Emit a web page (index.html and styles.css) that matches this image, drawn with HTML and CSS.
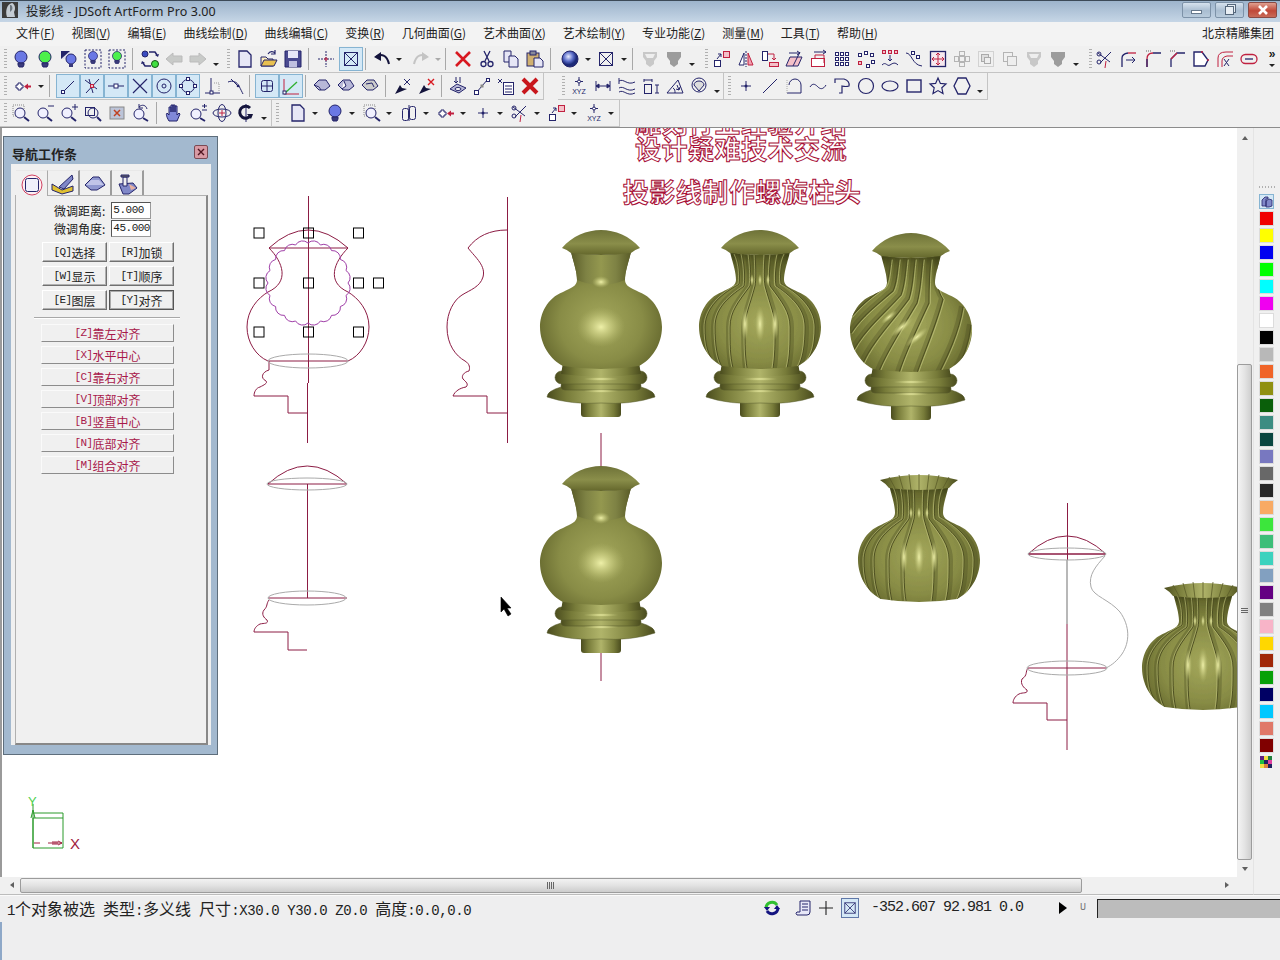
FILE: index.html
```html
<!DOCTYPE html>
<html lang="zh-CN">
<head>
<meta charset="utf-8">
<title>投影线 - JDSoft ArtForm Pro 3.00</title>
<link rel="stylesheet" href="styles.css">
</head>
<body>
<svg class="defs" width="0" height="0" aria-hidden="true">
<defs>
<radialGradient id="gBody" cx=".5" cy=".6" r=".62"><stop offset="0" stop-color="#a4a85c"/><stop offset=".55" stop-color="#888c46"/><stop offset=".85" stop-color="#686b30"/><stop offset="1" stop-color="#43461a"/></radialGradient>
<linearGradient id="gH"><stop offset="0" stop-color="#4a4c1e"/><stop offset=".18" stop-color="#777b39"/><stop offset=".5" stop-color="#b0b46a"/><stop offset=".82" stop-color="#777b39"/><stop offset="1" stop-color="#4a4c1e"/></linearGradient>
<linearGradient id="gCap" x1="0" y1="0" x2="0" y2="1"><stop offset="0" stop-color="#6e7238"/><stop offset=".55" stop-color="#8a8e4a"/><stop offset="1" stop-color="#64672c"/></linearGradient>
<linearGradient id="gNeck"><stop offset="0" stop-color="#5a5c28"/><stop offset=".25" stop-color="#7e8244"/><stop offset=".5" stop-color="#94984f"/><stop offset=".75" stop-color="#7e8244"/><stop offset="1" stop-color="#5a5c28"/></linearGradient>
<radialGradient id="gHi"><stop offset="0" stop-color="#eef0a8"/><stop offset=".5" stop-color="#cdd084" stop-opacity=".6"/><stop offset="1" stop-color="#b0b46a" stop-opacity="0"/></radialGradient>
<radialGradient id="gSph" cx=".4" cy=".35"><stop offset="0" stop-color="#e8ecff"/><stop offset=".6" stop-color="#5a6cc8"/><stop offset="1" stop-color="#1c2a78"/></radialGradient>
<path id="bodyP" d="M-30,22 C-27,34 -24,42 -24,50 C-24,56 -30,58 -38,62 C-54,68 -61,84 -61,97 C-61,115 -50,130 -38,136 Q0,142 38,136 C50,130 61,115 61,97 C61,84 54,68 38,62 C30,58 24,56 24,50 C24,42 27,34 30,22 Q0,28 -30,22Z"/>
<clipPath id="bodyClip"><use href="#bodyP"/></clipPath>
<g id="base">
<rect x="-20" y="168" width="40" height="19" rx="3" fill="url(#gH)"/>
<path d="M-40,157 Q-54,161 -54,167 Q-30,175 0,173 Q30,175 54,167 Q54,161 40,157Z" fill="url(#gH)" stroke="#55582a" stroke-width=".5"/>
<rect x="-40" y="152" width="80" height="8" rx="4" fill="url(#gH)" stroke="#55582a" stroke-width=".6"/>
<rect x="-46" y="141" width="92" height="13" rx="6.5" fill="url(#gH)" stroke="#55582a" stroke-width=".5"/>
<path d="M-38,133 L38,133 L40,144 Q0,149 -40,144Z" fill="url(#gH)"/>
<ellipse cx="0" cy="161" rx="18" ry="2" fill="url(#gHi)"/>
<ellipse cx="0" cy="149" rx="18" ry="2" fill="url(#gHi)"/>
</g>
<path id="capP" d="M-39,18 C-29,6 -14,0 0,0 C14,0 29,6 39,18 Q33,20 30,23 Q0,27 -30,23 Q-33,20 -39,18Z" fill="url(#gCap)"/>
<g id="plain">
<use href="#base"/>
<use href="#bodyP" fill="url(#gBody)"/>
<path d="M-30,22 C-27,34 -24,42 -24,50 Q0,60 24,50 C24,42 27,34 30,22 Q0,28 -30,22Z" fill="url(#gNeck)"/>
<ellipse cx="0" cy="97" rx="24" ry="20" fill="url(#gHi)"/>
<ellipse cx="0" cy="52" rx="9" ry="6" fill="url(#gHi)"/>
<use href="#capP"/>
</g>
<g id="flutesHalf" fill="none">
<path d="M5,24 C4,40 4,50 5,56 C10,75 15,85 15,97 C15,115 15,125 13,138"/>
<path d="M11,24 C9,40 9,50 10,56 C22,72 30,82 30,97 C30,115 30,125 27,138"/>
<path d="M18,24 C15,38 15,50 16,56 C34,68 45,80 45,97 C45,115 43,128 38,137"/>
<path d="M25,24 C20,34 20,48 21,54 C44,66 55,82 55,97 C55,115 52,125 46,132"/>
</g>
<g id="flutedBody">
<use href="#bodyP" fill="url(#gBody)"/>
<g clip-path="url(#bodyClip)">
<g stroke="#3c3e18" stroke-width="4" opacity=".28" transform="translate(2,0)"><use href="#flutesHalf"/></g>
<g stroke="#3c3e18" stroke-width="4" opacity=".28" transform="translate(-2,0)"><use href="#flutesHalf" transform="scale(-1,1)"/></g>
<g stroke="#4e5022" stroke-width="1"><use href="#flutesHalf"/><use href="#flutesHalf" transform="scale(-1,1)"/></g>
<g stroke="#c8cc84" stroke-width=".7" opacity=".8" transform="translate(-1,0)"><use href="#flutesHalf"/><use href="#flutesHalf" transform="scale(-1,1)"/></g>
</g>
<ellipse cx="0" cy="94" rx="5" ry="18" fill="url(#gHi)"/>
<ellipse cx="-15" cy="94" rx="4" ry="16" fill="url(#gHi)"/>
<ellipse cx="15" cy="94" rx="4" ry="16" fill="url(#gHi)"/>
<ellipse cx="0" cy="50" rx="2" ry="6" fill="url(#gHi)"/>
<ellipse cx="-8" cy="50" rx="2" ry="6" fill="url(#gHi)"/>
<ellipse cx="8" cy="50" rx="2" ry="6" fill="url(#gHi)"/>
</g>
<g id="flutedRim">
<path d="M-39,17 Q0,7 39,17 Q34,20 30,25 Q0,29 -30,25 Q-34,20 -39,17Z" fill="url(#gH)"/>
<path d="M-30,14 L-24,25 M-20,12 L-16,26 M-10,11 L-8,27 M0,11 V27 M10,11 L8,27 M20,12 L16,26 M30,14 L24,25" stroke="#5a5c28" stroke-width=".8" fill="none"/>
</g>
<g id="twistLines" fill="none">
<path d="M-20,26 C-22,40 -22,48 -26,54 C-40,64 -50,72 -60,84"/>
<path d="M-12,26 C-14,40 -14,50 -18,58 C-34,72 -50,84 -60,100"/>
<path d="M-4,26 C-6,42 -6,52 -10,62 C-26,80 -46,96 -58,118"/>
<path d="M4,26 C2,42 2,54 -2,66 C-18,88 -38,108 -48,130"/>
<path d="M12,26 C10,42 10,56 6,70 C-8,94 -24,118 -32,138"/>
<path d="M20,26 C18,42 18,56 18,70 C6,96 -6,120 -12,140"/>
<path d="M28,26 C26,42 24,54 32,66 C24,96 12,122 6,140"/>
<path d="M52,74 C48,100 36,124 28,140"/>
<path d="M60,92 C58,110 52,126 46,134"/>
</g>
<g id="bulb" stroke="#24246a"><circle cx="10" cy="8" r="6"/><path d="M7 14h6v2l-1 2H8l-1-2z" fill="#3a3a7a"/></g>
<g id="boxx" fill="none" stroke="#24246a"><rect x="3.5" y="3.5" width="13" height="13"/><path d="M3.5 3.5l13 13M16.5 3.5l-13 13"/></g>
<g id="shieldG"><path d="M3 3h14v5l-3 4v3l-4 3-4-3v-3L3 8z"/></g>
<g id="xyz"><path d="M10 1v9M6 5.500h8" stroke="#24246a" fill="none"/><circle cx="10" cy="5.500" r="1.500" fill="#fff" stroke="#24246a"/></g>
<g id="tDrop"><path d="M0 0h6l-3 3z" fill="#222"/></g>
</defs>
</svg>

<header class="titlebar">
  <svg class="appicon" viewBox="0 0 16 16"><rect width="16" height="16" fill="#3c3c3c"/><path d="M5 15C3 9 5 2 10 1c3 1 4 6 2 9l1 5z" fill="#c4ccd4"/><path d="M8 3c2 0 3 2 2 5L8 10z" fill="#6c7680"/></svg>
  <span class="title">投影线 - JDSoft ArtForm Pro 3.00</span>
  <div class="winbtns">
    <span class="wb"><i class="w-min"></i></span>
    <span class="wb"><i class="w-res"></i></span>
    <span class="wb close"><svg viewBox="0 0 12 10" width="12" height="10"><path d="M2 1l8 8M10 1L2 9" stroke="#fff" stroke-width="2.600"/></svg></span>
  </div>
</header>

<nav class="menubar">
  <span>文件(<u>F</u>)</span><span>视图(<u>V</u>)</span><span>编辑(<u>E</u>)</span><span>曲线绘制(<u>D</u>)</span><span>曲线编辑(<u>C</u>)</span><span>变换(<u>R</u>)</span><span>几何曲面(<u>G</u>)</span><span>艺术曲面(<u>X</u>)</span><span>艺术绘制(<u>Y</u>)</span><span>专业功能(<u>Z</u>)</span><span>测量(<u>M</u>)</span><span>工具(<u>T</u>)</span><span>帮助(<u>H</u>)</span>
  <span class="company">北京精雕集团</span>
</nav>

<div class="tbrow">
  <div class="tb full">
    <i class="grip"></i>
    <b class="ic"><svg viewBox="0 0 20 20"><use href="#bulb" fill="#6a78e4"/></svg></b>
    <b class="ic"><svg viewBox="0 0 20 20"><use href="#bulb" fill="#4cf04c"/></svg></b>
    <b class="ic"><svg viewBox="0 0 20 20"><path d="M2 2h9v8H2z" fill="#24246a"/><path d="M2 10l9-8v8z" fill="#e0e0ee"/><circle cx="12" cy="10" r="5" fill="#6a78e4" stroke="#24246a"/><path d="M10 15h4v3h-4z" fill="#3a3a7a"/></svg></b>
    <b class="ic"><svg viewBox="0 0 20 20"><rect x="2" y="1" width="16" height="18" fill="none" stroke="#24246a" stroke-dasharray="2 1.500"/><g transform="translate(2.500 1) scale(.75)"><use href="#bulb" fill="#6a78e4"/></g></svg></b>
    <b class="ic"><svg viewBox="0 0 20 20"><rect x="2" y="1" width="16" height="18" fill="none" stroke="#24246a" stroke-dasharray="2 1.500"/><g transform="translate(2.500 1) scale(.75)"><use href="#bulb" fill="#4cf04c"/></g></svg></b>
    <i class="sep"></i>
    <b class="ic"><svg viewBox="0 0 20 20"><circle cx="5" cy="5" r="3" fill="#3a4cc0" stroke="#24246a"/><circle cx="15" cy="15" r="3.500" fill="#40e040" stroke="#145014"/><path d="M9 3h6l2 3M11 17H5l-2-3" fill="none" stroke="#24246a" stroke-width="1.500"/><path d="M15 6l4-1-1 3zM5 14l-4 1 1-3z" fill="#24246a"/></svg></b>
    <b class="ic"><svg viewBox="0 0 20 20"><path d="M2 10l7-6v3h9v6H9v3z" fill="#c8cac8" stroke="#bbb"/></svg></b>
    <b class="ic"><svg viewBox="0 0 20 20"><path d="M18 10l-7-6v3H2v6h9v3z" fill="#c8cac8" stroke="#bbb"/></svg></b>
    <b class="dr end"><svg width="6" height="3"><use href="#tDrop"/></svg></b>
    <i class="grip g2"></i>
    <b class="ic"><svg viewBox="0 0 20 20"><path d="M4 2h8l4 4v12H4z" fill="#e6e6f6" stroke="#24246a" stroke-width="1.300"/></svg></b>
    <b class="ic"><svg viewBox="0 0 20 20"><path d="M2 17V8h5l2 2h5v7z" fill="#fff0c0" stroke="#24246a"/><path d="M2 17l3-6h13l-3 6z" fill="#e8c050" stroke="#24246a"/><path d="M9 5c2-3 5-3 7-1M16 1v4h-4" fill="none" stroke="#24246a" stroke-width="1.200"/></svg></b>
    <b class="ic"><svg viewBox="0 0 20 20"><path d="M2 2h16v16H2z" fill="#4a4a90" stroke="#24246a"/><rect x="5" y="2" width="10" height="7" fill="#e8e8f8"/><rect x="6" y="12" width="8" height="6" fill="#c0c0e0"/></svg></b>
    <i class="sep"></i>
    <b class="ic"><svg viewBox="0 0 20 20"><path d="M10 2v16M2 10h16" stroke="#24246a" stroke-dasharray="2 1" fill="none"/><path d="M8 10h4M10 8v4" stroke="#c02040"/></svg></b>
    <b class="ic on ml1"><svg viewBox="0 0 20 20"><use href="#boxx"/></svg></b>
    <i class="sep tight"></i>
    <b class="ic"><svg viewBox="0 0 20 20"><path d="M4 8c5-4 11-2 13 7" fill="none" stroke="#14143c" stroke-width="2"/><path d="M9 3L2 8l7 4z" fill="#14143c"/></svg></b>
    <b class="dr w15"><svg width="6" height="3"><use href="#tDrop"/></svg></b>
    <b class="ic"><svg viewBox="0 0 20 20"><path d="M16 8c-5-4-11-2-13 7" fill="none" stroke="#c4c4c4" stroke-width="2"/><path d="M11 3l7 5-7 4z" fill="#c4c4c4"/></svg></b>
    <b class="dr w9"><svg width="6" height="3"><path d="M0 0h6l-3 3z" fill="#aaa"/></svg></b>
    <i class="sep"></i>
    <b class="ic"><svg viewBox="0 0 20 20"><path d="M3 3l14 14M17 3L3 17" stroke="#d81820" stroke-width="2.600"/></svg></b>
    <b class="ic"><svg viewBox="0 0 20 20"><path d="M7 2l5 10M13 2L8 12" stroke="#24246a" stroke-width="1.300"/><circle cx="6.500" cy="15" r="2.500" fill="none" stroke="#24246a" stroke-width="1.300"/><circle cx="13.500" cy="15" r="2.500" fill="none" stroke="#24246a" stroke-width="1.300"/></svg></b>
    <b class="ic"><svg viewBox="0 0 20 20"><path d="M3 2h7v11H3z" fill="#e6e6f6" stroke="#24246a"/><path d="M8 7h6l3 3v8H8z" fill="#e6e6f6" stroke="#24246a"/></svg></b>
    <b class="ic"><svg viewBox="0 0 20 20"><rect x="2" y="4" width="12" height="13" fill="#d0b070" stroke="#24246a"/><rect x="5" y="2" width="6" height="4" fill="#889" stroke="#24246a"/><path d="M9 9h6l3 3v6H9z" fill="#e6e6f6" stroke="#24246a"/></svg></b>
    <i class="sep wide"></i>
    <b class="ic"><svg viewBox="0 0 20 20"><circle cx="10" cy="10" r="8" fill="url(#gSph)" stroke="#24246a"/></svg></b>
    <b class="dr w12"><svg width="6" height="3"><use href="#tDrop"/></svg></b>
    <b class="ic"><svg viewBox="0 0 20 20"><use href="#boxx"/></svg></b>
    <b class="dr w11"><svg width="6" height="3"><use href="#tDrop"/></svg></b>
    <i class="sep"></i>
    <b class="ic"><svg viewBox="0 0 20 20"><use href="#shieldG" fill="#c8c8c8"/><path d="M5 5h10l-2 4H7z" fill="#eee"/></svg></b>
    <b class="ic"><svg viewBox="0 0 20 20"><use href="#shieldG" fill="#9c9c9c"/></svg></b>
    <b class="dr end"><svg width="6" height="3"><use href="#tDrop"/></svg></b>
    <i class="grip g3"></i>
    <b class="ic"><svg viewBox="0 0 20 20"><rect x="2.500" y="11.500" width="6" height="6" fill="#fff" stroke="#24246a"/><rect x="11.500" y="2.500" width="6" height="6" fill="#f4c0c8" stroke="#c02040"/><path d="M5 10l4-5M6 5h3v3" stroke="#24246a" fill="none"/></svg></b>
    <b class="ic"><svg viewBox="0 0 20 20"><path d="M8 4L3 16h5z" fill="#fff" stroke="#24246a"/><path d="M12 4l5 12h-5z" fill="#f0a0b0" stroke="#c02040"/><path d="M10 2v16" stroke="#24246a" stroke-dasharray="2 1"/></svg></b>
    <b class="ic"><svg viewBox="0 0 20 20"><rect x="2.500" y="2.500" width="5" height="9" fill="#fff" stroke="#24246a"/><rect x="9.500" y="13.500" width="9" height="4" fill="#f4c0c8" stroke="#c02040"/><path d="M8 5h6v6M12 9l2 2 2-2" fill="none" stroke="#c02040"/></svg></b>
    <b class="ic"><svg viewBox="0 0 20 20"><path d="M6 8h12l-4 9H2z" fill="#f4c0c8" stroke="#24246a"/><path d="M9 17l7-14M5 4h11M13 2l3 2-3 2" stroke="#24246a" fill="none"/></svg></b>
    <b class="ic"><svg viewBox="0 0 20 20"><rect x="3.500" y="9.500" width="13" height="8" fill="#fff" stroke="#c02040"/><path d="M7 9V6h9v8" fill="none" stroke="#c02040"/><path d="M6 3h12M15 1l3 2-3 2" stroke="#24246a" fill="none"/></svg></b>
    <b class="ic"><svg viewBox="0 0 20 20"><g fill="#fff" stroke="#24246a"><rect x="3.500" y="3.500" width="3" height="3"/><rect x="8.500" y="3.500" width="3" height="3"/><rect x="13.500" y="3.500" width="3" height="3"/><rect x="3.500" y="8.500" width="3" height="3"/><rect x="8.500" y="8.500" width="3" height="3"/><rect x="13.500" y="8.500" width="3" height="3"/><rect x="3.500" y="13.500" width="3" height="3"/><rect x="8.500" y="13.500" width="3" height="3"/><rect x="13.500" y="13.500" width="3" height="3"/></g></svg></b>
    <b class="ic"><svg viewBox="0 0 20 20"><g fill="#fff" stroke="#24246a"><rect x="8.500" y="2.500" width="3" height="3"/><rect x="14.500" y="4.500" width="3" height="3"/><rect x="2.500" y="4.500" width="3" height="3"/><rect x="15.500" y="11.500" width="3" height="3"/><rect x="10.500" y="15.500" width="3" height="3"/></g><rect x="2.500" y="12.500" width="3" height="3" fill="#f4c0c8" stroke="#c02040"/></svg></b>
    <b class="ic"><svg viewBox="0 0 20 20"><g fill="#f4c0c8" stroke="#c02040"><rect x="2.500" y="1.500" width="3" height="3"/><rect x="8.500" y="1.500" width="3" height="3"/><rect x="14.500" y="1.500" width="3" height="3"/></g><path d="M10 6v6M8 10l2 2 2-2M2 16c4-4 5 2 8 0s5-3 8 0" stroke="#24246a" fill="none"/></svg></b>
    <b class="ic"><svg viewBox="0 0 20 20"><path d="M2 4c6 0 6 12 16 13" fill="none" stroke="#24246a"/><g fill="#fff" stroke="#24246a"><rect x="7.500" y="2.500" width="3" height="3"/><rect x="12.500" y="6.500" width="3" height="3"/></g></svg></b>
    <b class="ic"><svg viewBox="0 0 20 20"><rect x="2.500" y="2.500" width="15" height="15" fill="#f6e8ee" stroke="#24246a" stroke-width="1.300"/><path d="M10 4v12M4 10h12M8 6l2-2 2 2M8 14l2 2 2-2M6 8l-2 2 2 2M14 8l2 2-2 2" fill="none" stroke="#c02040"/></svg></b>
    <b class="ic"><svg viewBox="0 0 20 20"><g fill="none" stroke="#b4b4b4"><rect x="7.500" y="2.500" width="5" height="4"/><rect x="7.500" y="13.500" width="5" height="4"/><rect x="2.500" y="7.500" width="4" height="5"/><rect x="13.500" y="7.500" width="4" height="5"/><rect x="7.500" y="7.500" width="5" height="5"/></g></svg></b>
    <b class="ic"><svg viewBox="0 0 20 20"><rect x="2.500" y="2.500" width="15" height="15" fill="none" stroke="#b4b4b4" stroke-dasharray="1 1"/><rect x="5.500" y="5.500" width="7" height="7" fill="#ddd" stroke="#aaa"/><rect x="8.500" y="8.500" width="6" height="6" fill="#eee" stroke="#aaa"/></svg></b>
    <b class="ic"><svg viewBox="0 0 20 20"><rect x="3.500" y="3.500" width="9" height="9" fill="none" stroke="#b4b4b4"/><rect x="7.500" y="7.500" width="9" height="9" fill="#eee" stroke="#b4b4b4"/></svg></b>
    <b class="ic"><svg viewBox="0 0 20 20"><use href="#shieldG" fill="#c8c8c8"/><path d="M5 5h10l-2 4H7z" fill="#eee"/></svg></b>
    <b class="ic"><svg viewBox="0 0 20 20"><use href="#shieldG" fill="#9c9c9c"/></svg></b>
    <b class="dr end"><svg width="6" height="3"><use href="#tDrop"/></svg></b>
    <i class="grip g4"></i>
    <b class="ic"><svg viewBox="0 0 20 20"><path d="M3 4l12 9M16 3L5 14" stroke="#24246a"/><circle cx="4" cy="5" r="2" fill="none" stroke="#24246a"/><circle cx="4" cy="13" r="2" fill="none" stroke="#24246a"/><path d="M11 12l-1 7" stroke="#c02040"/></svg></b>
    <b class="ic"><svg viewBox="0 0 20 20"><path d="M3 18V9q0-4 6-5" fill="none" stroke="#24246a" stroke-width="1.300"/><path d="M9 4h8" stroke="#c02040" stroke-width="1.300"/><path d="M7 11h9M13 8l3 3-3 3" stroke="#24246a" fill="none"/></svg></b>
    <b class="ic"><svg viewBox="0 0 20 20"><path d="M4 18V10q0-6 6-6" fill="none" stroke="#c02040" stroke-width="1.300"/><path d="M10 4h8M4 18v-8" stroke="#24246a" stroke-width="1.300"/><path d="M3 2h5" stroke="#aaa" stroke-dasharray="1 1" stroke-width="2"/></svg></b>
    <b class="ic"><svg viewBox="0 0 20 20"><path d="M4 18V10l6-6h8" fill="none" stroke="#24246a" stroke-width="1.300"/><path d="M4 10l6-6" stroke="#c02040" stroke-width="1.300"/><path d="M3 2h5" stroke="#aaa" stroke-dasharray="1 1" stroke-width="2"/></svg></b>
    <b class="ic"><svg viewBox="0 0 20 20"><path d="M3 3h8l6 8-3 6H3z" fill="#fff" stroke="#24246a" stroke-width="1.400"/><circle cx="11" cy="3" r="1" fill="#c02040"/><circle cx="17" cy="11" r="1" fill="#c02040"/></svg></b>
    <b class="ic"><svg viewBox="0 0 20 20"><path d="M3 18V9q0-6 8-6h7M7 18v-6q0-4 5-5h6" fill="none" stroke="#c02040"/><path d="M9 17l5-7M9 10l5 7" stroke="#24246a"/></svg></b>
    <b class="ic"><svg viewBox="0 0 20 20"><rect x="2" y="5.500" width="16" height="9" rx="4.500" fill="none" stroke="#c02040" stroke-width="1.300"/><path d="M6 10h8" stroke="#24246a" stroke-width="1.300"/></svg></b>
    <span class="more">»</span>
    <b class="dr mored"><svg width="6" height="3"><use href="#tDrop"/></svg></b>
  </div>
</div>

<div class="tbrow">
  <div class="tb r2a">
    <i class="grip gl"></i>
    <b class="ic"><svg viewBox="0 0 20 20"><path d="M3 9h2V7h3v2h2v3H8v2H5v-2H3z" fill="#fff" stroke="#24246a"/><path d="M11 10.500l4-3v2h3v2h-3v2z" fill="#c02040"/></svg></b>
    <b class="dr w11"><svg width="6" height="3"><use href="#tDrop"/></svg></b>
    <i class="sep mr6"></i>
    <b class="ic on"><svg viewBox="0 0 20 20"><path d="M6 15L16 5" stroke="#24246a"/><rect x="3.500" y="14.500" width="3" height="3" fill="#fff" stroke="#24246a"/></svg></b>
    <b class="ic on"><svg viewBox="0 0 20 20"><path d="M4 17L17 3M3 4l12 9M7 3l4 14" stroke="#24246a" fill="none"/><rect x="8.500" y="8.500" width="3" height="3" fill="#f4c0c8" stroke="#c02040"/></svg></b>
    <b class="ic on"><svg viewBox="0 0 20 20"><path d="M2 10h16" stroke="#24246a"/><rect x="8" y="8" width="4" height="4" fill="#fff" stroke="#24246a"/></svg></b>
    <b class="ic on"><svg viewBox="0 0 20 20"><path d="M3 3l14 14M17 3L3 17" stroke="#24246a" stroke-width="1.200"/></svg></b>
    <b class="ic on"><svg viewBox="0 0 20 20"><circle cx="10" cy="10" r="7" fill="none" stroke="#24246a"/><circle cx="10" cy="10" r="2" fill="none" stroke="#24246a"/></svg></b>
    <b class="ic on"><svg viewBox="0 0 20 20"><circle cx="10" cy="10" r="6.500" fill="none" stroke="#24246a"/><g fill="#fff" stroke="#24246a"><rect x="8.500" y="1.500" width="3" height="3"/><rect x="8.500" y="15.500" width="3" height="3"/><rect x="1.500" y="8.500" width="3" height="3"/><rect x="15.500" y="8.500" width="3" height="3"/></g></svg></b>
    <b class="ic"><svg viewBox="0 0 20 20"><path d="M9 2v15M3 17h15" stroke="#24246a" fill="none"/><path d="M12 7h5v8" stroke="#999" stroke-dasharray="1 1" fill="none"/><rect x="8" y="15" width="3" height="3" fill="#fff" stroke="#24246a"/></svg></b>
    <b class="ic"><svg viewBox="0 0 20 20"><path d="M2 6c5-2 9 0 11 4s3 6 4 8M5 3l8 8" stroke="#24246a" fill="none"/><circle cx="12" cy="10" r="1.300" fill="#24246a"/></svg></b>
    <i class="sep s1"></i>
    <b class="ic on"><svg viewBox="0 0 20 20"><rect x="4.500" y="4.500" width="11" height="11" rx="2" fill="none" stroke="#24246a"/><path d="M10 4v12M4 10h12" stroke="#24246a"/></svg></b>
    <b class="ic on"><svg viewBox="0 0 20 20"><path d="M3 3v15h15" fill="none" stroke="#c02040"/><path d="M4 17L16 6" stroke="#30b030" stroke-width="1.300"/><rect x="2" y="15" width="3" height="3" fill="#fff" stroke="#24246a"/></svg></b>
    <i class="sep tight"></i>
    <b class="ic"><svg viewBox="0 0 20 20"><path d="M2 9l5-5h7l4 6-5 4H7z" fill="#b8b8d8" stroke="#24246a"/><path d="M2 9l5 2 2 3" fill="#fff" stroke="#24246a"/></svg></b>
    <b class="ic"><svg viewBox="0 0 20 20"><path d="M2 9l5-5h7l4 6-5 4H7z" fill="#b8b8d8" stroke="#24246a"/><path d="M8 5l2 5-4 3" fill="#fff" stroke="#24246a"/></svg></b>
    <b class="ic"><svg viewBox="0 0 20 20"><path d="M2 9l5-5h7l4 6-5 4H7z" fill="#ccc" stroke="#24246a"/><path d="M6 8l6-1 2 4" fill="none" stroke="#24246a"/></svg></b>
    <i class="sep"></i>
    <b class="ic"><svg viewBox="0 0 20 20"><path d="M3 18l5-9 2 3 5 1z" fill="#14143c" transform="translate(-1 0)"/><path d="M11 3l6 6M17 3l-6 6" stroke="#24246a"/></svg></b>
    <b class="ic"><svg viewBox="0 0 20 20"><path d="M3 18l5-9 2 3 5 1z" fill="#14143c" transform="translate(-1 0)"/><path d="M11 3l6 6M17 3l-6 6" stroke="#d81820" stroke-width="1.400"/></svg></b>
    <i class="sep tight"></i>
    <b class="ic"><svg viewBox="0 0 20 20"><path d="M2 13l7-5 9 4-7 5z" fill="#b8b8d8" stroke="#24246a"/><ellipse cx="10" cy="13" rx="3" ry="1.500" fill="#fff" stroke="#24246a"/><path d="M8 1v6M12 1v6M6 5l2 2 2-2" stroke="#24246a" fill="none"/></svg></b>
    <b class="ic"><svg viewBox="0 0 20 20"><path d="M4 17L16 3" stroke="#24246a"/><rect x="2.500" y="14.500" width="4" height="4" fill="#fff" stroke="#24246a"/><rect x="8.500" y="8.500" width="3" height="3" fill="#888"/><rect x="14.500" y="2.500" width="3" height="3" fill="#fff" stroke="#24246a"/></svg></b>
    <b class="ic"><svg viewBox="0 0 20 20"><rect x="7.500" y="6.500" width="10" height="12" fill="#fff" stroke="#24246a"/><path d="M9 10h7M9 13h7M9 16h7M2 3l4 4M6 3L2 7" stroke="#24246a"/></svg></b>
    <b class="ic"><svg viewBox="0 0 20 20"><path d="M3 3l14 14M17 3L3 17" stroke="#c8161c" stroke-width="4"/></svg></b>
  </div>
  <div class="tb r2b">
    <i class="grip"></i>
    <b class="ic"><svg viewBox="0 0 20 20"><use href="#xyz"/><text x="10" y="18" class="xyzt">XYZ</text></svg></b>
    <b class="ic"><svg viewBox="0 0 20 20"><path d="M3 5v10M17 5v10M3 10h14M3 10l3-2v4zM17 10l-3-2v4z" stroke="#24246a" fill="#24246a"/></svg></b>
    <b class="ic"><svg viewBox="0 0 20 20"><path d="M2 2v6M2 5c5-3 8 5 16 1M2 12c5-3 8 5 16 1M2 16c5-3 8 5 16 1" fill="none" stroke="#24246a"/></svg></b>
    <b class="ic"><svg viewBox="0 0 20 20"><rect x="3.500" y="8.500" width="7" height="9" fill="none" stroke="#24246a"/><path d="M3 3v3M11 3v3M3 4h8M14 9h4M14 17h4M16 9v8" stroke="#24246a"/></svg></b>
    <b class="ic"><svg viewBox="0 0 20 20"><path d="M2 17h16L13 4z" fill="none" stroke="#24246a"/><path d="M10 17c0-2 0-4-2-5" fill="none" stroke="#24246a"/><path d="M12 9l2 5M11 13l3 1 1-3" stroke="#24246a" fill="none"/></svg></b>
    <b class="ic"><svg viewBox="0 0 20 20"><circle cx="10" cy="9" r="7" fill="none" stroke="#24246a"/><path d="M5 9a5 4 0 0 1 10 0l-5 6z" fill="#ddd" stroke="#24246a"/></svg></b>
    <b class="dr end"><svg width="6" height="3"><use href="#tDrop"/></svg></b>
  </div>
  <div class="tb r2c">
    <i class="grip g1"></i>
    <b class="ic"><svg viewBox="0 0 20 20"><path d="M10 5v10M5 10h10" stroke="#24246a"/><circle cx="10" cy="10" r="1.500" fill="#24246a"/></svg></b>
    <b class="ic"><svg viewBox="0 0 20 20"><path d="M3 17L17 3" stroke="#24246a"/></svg></b>
    <b class="ic"><svg viewBox="0 0 20 20"><path d="M3 17h14V9a6 6 0 0 0-12 0" fill="none" stroke="#24246a"/><path d="M3 4v13" stroke="#aaa" stroke-dasharray="1 1"/></svg></b>
    <b class="ic"><svg viewBox="0 0 20 20"><path d="M2 11c3-5 6-2 8 0s5 3 8-2" fill="none" stroke="#24246a"/></svg></b>
    <b class="ic"><svg viewBox="0 0 20 20"><path d="M3 7V3h9q6 2 5 7-3 1-7 0v7H7" fill="none" stroke="#24246a" stroke-width="1.200"/></svg></b>
    <b class="ic"><svg viewBox="0 0 20 20"><circle cx="10" cy="10" r="7.500" fill="none" stroke="#24246a" stroke-width="1.200"/></svg></b>
    <b class="ic"><svg viewBox="0 0 20 20"><ellipse cx="10" cy="10" rx="8" ry="5" fill="none" stroke="#24246a" stroke-width="1.200"/></svg></b>
    <b class="ic"><svg viewBox="0 0 20 20"><rect x="3" y="4" width="14" height="12" fill="none" stroke="#24246a" stroke-width="1.400"/></svg></b>
    <b class="ic"><svg viewBox="0 0 20 20"><path d="M10 2l2.400 5.400 5.600.6-4.200 3.800 1.200 5.700L10 14.600 5 17.500l1.200-5.700L2 8l5.600-.6z" fill="none" stroke="#24246a" stroke-width="1.200"/></svg></b>
    <b class="ic"><svg viewBox="0 0 20 20"><path d="M6 2h8l4 8-4 8H6l-4-8z" fill="none" stroke="#24246a" stroke-width="1.300"/></svg></b>
    <b class="dr end"><svg width="6" height="3"><use href="#tDrop"/></svg></b>
  </div>
</div>

<div class="tbrow last">
  <div class="tb r3a">
    <i class="grip"></i>
    <b class="ic"><svg viewBox="0 0 20 20"><rect x="2" y="2" width="11" height="11" fill="none" stroke="#888" stroke-dasharray="1 1"/><circle cx="9" cy="10" r="5" fill="#f0f0ff" stroke="#24246a"/><path d="M13 14l5 4" stroke="#24246a" stroke-width="2"/></svg></b>
    <b class="ic"><svg viewBox="0 0 20 20"><circle cx="8" cy="10" r="5" fill="#f0f0ff" stroke="#24246a"/><path d="M12 14l5 4" stroke="#24246a" stroke-width="2"/><path d="M13 3h6" stroke="#24246a"/></svg></b>
    <b class="ic"><svg viewBox="0 0 20 20"><circle cx="8" cy="10" r="5" fill="#f0f0ff" stroke="#24246a"/><path d="M12 14l5 4" stroke="#24246a" stroke-width="2"/><path d="M13 4h6M16 1v6" stroke="#24246a"/></svg></b>
    <b class="ic"><svg viewBox="0 0 20 20"><rect x="2.500" y="4.500" width="9" height="8" fill="none" stroke="#24246a"/><circle cx="10" cy="10" r="5" fill="none" stroke="#24246a"/><path d="M14 14l4 4" stroke="#24246a" stroke-width="2"/></svg></b>
    <b class="ic"><svg viewBox="0 0 20 20"><rect x="3" y="4" width="14" height="12" fill="#bcc4d8" stroke="#888"/><path d="M7 7l6 6M13 7l-6 6" stroke="#c04020" stroke-width="1.500"/></svg></b>
    <b class="ic"><svg viewBox="0 0 20 20"><circle cx="8" cy="11" r="5" fill="#f0f0ff" stroke="#24246a"/><path d="M12 15l5 3" stroke="#24246a" stroke-width="2"/><path d="M8 4c3-3 7-2 8 2M8 1v4h4" stroke="#24246a" fill="none"/></svg></b>
    <i class="sep"></i>
    <b class="ic"><svg viewBox="0 0 20 20"><path d="M5 18c-3-5-3-7-2-8l2 2V4l2 0v5V2h2v7V2h2v7V3h2v9l2-2 1 1-3 7z" fill="#8088d8" stroke="#24246a"/></svg></b>
    <b class="ic"><svg viewBox="0 0 20 20"><circle cx="8" cy="11" r="5" fill="#f0f0ff" stroke="#24246a"/><path d="M12 15l5 3" stroke="#24246a" stroke-width="2"/><path d="M14 3h5M16.500 1v4M14 7h5" stroke="#24246a"/></svg></b>
    <b class="ic"><svg viewBox="0 0 20 20"><ellipse cx="10" cy="10" rx="9" ry="4" fill="none" stroke="#24246a"/><ellipse cx="10" cy="10" rx="4" ry="8.500" fill="none" stroke="#24246a"/><path d="M10 7v6M7 10h6" stroke="#c02040"/></svg></b>
    <b class="ic"><svg viewBox="0 0 20 20"><path d="M10 1v18" stroke="#24246a"/><path d="M14 5a6 6 0 1 0 1 7" fill="none" stroke="#14143c" stroke-width="3"/><path d="M11 11l6 0-2 5z" fill="#14143c"/></svg></b>
    <b class="dr end"><svg width="6" height="3"><use href="#tDrop"/></svg></b>
    <i class="grip g5"></i>
  </div>
  <div class="tb r3b">
    <b class="ic"><svg viewBox="0 0 20 20"><path d="M4 2h8l4 4v12H4z" fill="#e6e6f6" stroke="#24246a" stroke-width="1.300"/></svg></b>
    <b class="dr dn"><svg width="6" height="3"><use href="#tDrop"/></svg></b>
    <b class="ic"><svg viewBox="0 0 20 20"><use href="#bulb" fill="#6a78e4"/></svg></b>
    <b class="dr dn"><svg width="6" height="3"><use href="#tDrop"/></svg></b>
    <b class="ic"><svg viewBox="0 0 20 20"><rect x="2" y="2" width="11" height="11" fill="none" stroke="#888" stroke-dasharray="1 1"/><circle cx="9" cy="10" r="5" fill="#f0f0ff" stroke="#24246a"/><path d="M13 14l5 4" stroke="#24246a" stroke-width="2"/></svg></b>
    <b class="dr dn"><svg width="6" height="3"><use href="#tDrop"/></svg></b>
    <b class="ic"><svg viewBox="0 0 20 20"><rect x="3.500" y="5.500" width="6" height="12" rx="2" fill="none" stroke="#24246a"/><rect x="10.500" y="3.500" width="6" height="13" rx="2" fill="none" stroke="#24246a"/><path d="M10 2v16" stroke="#24246a"/></svg></b>
    <b class="dr dn"><svg width="6" height="3"><use href="#tDrop"/></svg></b>
    <b class="ic"><svg viewBox="0 0 20 20"><path d="M3 9h2V7h3v2h2v3H8v2H5v-2H3z" fill="#fff" stroke="#24246a"/><path d="M11 10.500l4-3v2h3v2h-3v2z" fill="#c02040"/></svg></b>
    <b class="dr dn"><svg width="6" height="3"><use href="#tDrop"/></svg></b>
    <b class="ic"><svg viewBox="0 0 20 20"><path d="M10 5v10M5 10h10" stroke="#24246a"/><circle cx="10" cy="10" r="1.500" fill="#24246a"/></svg></b>
    <b class="dr dn"><svg width="6" height="3"><use href="#tDrop"/></svg></b>
    <b class="ic"><svg viewBox="0 0 20 20"><path d="M3 4l12 9M16 3L5 14" stroke="#24246a"/><circle cx="4" cy="5" r="2" fill="none" stroke="#24246a"/><circle cx="4" cy="13" r="2" fill="none" stroke="#24246a"/><path d="M11 12l-1 7" stroke="#c02040"/></svg></b>
    <b class="dr dn"><svg width="6" height="3"><use href="#tDrop"/></svg></b>
    <b class="ic"><svg viewBox="0 0 20 20"><rect x="2.500" y="11.500" width="6" height="6" fill="#fff" stroke="#24246a"/><rect x="11.500" y="2.500" width="6" height="6" fill="#f4c0c8" stroke="#c02040"/><path d="M5 10l4-5M6 5h3v3" stroke="#24246a" fill="none"/></svg></b>
    <b class="dr dn"><svg width="6" height="3"><use href="#tDrop"/></svg></b>
    <b class="ic"><svg viewBox="0 0 20 20"><use href="#xyz"/><text x="10" y="18" class="xyzt">XYZ</text></svg></b>
    <b class="dr dn"><svg width="6" height="3"><use href="#tDrop"/></svg></b>
  </div>
</div>

<main class="main">
  <div class="centercol">
    <div class="viewrow">
      <section class="canvas">
        <svg class="drawing" width="1235" height="749" viewBox="2 128 1235 749">
          <g class="cadtext">
            <text x="741" y="133" text-anchor="middle">雕刻行业经验介绍</text>
            <text x="741" y="159" text-anchor="middle">设计疑难技术交流</text>
            <text x="742" y="202" text-anchor="middle">投影线制作螺旋柱头</text>
          </g>

          <g class="cad">
            <path d="M308.500 196V383M307.500 383V443"/>
            <path d="M269 248Q308 212 348 248ZM269 248C283 262 290 282 268 292C258 298 247 310 247 327C247 342 256 356 268 361M348 248C334 262 326 282 348 292C358 298 369 310 369 327C369 342 360 356 348 361M268 361H348"/>
            <path d="M269 361V370C262 372 260 378 266 381C268 383 264 385 260 387C256 388 254 392 254 396H288V413H307"/>
          </g>
          <ellipse class="grayline" cx="308" cy="361" rx="40" ry="7"/>
          <path class="scallop" d="M348 283A8 8 0 0 1 346 295.400A8 8 0 0 1 340.400 306.500A8 8 0 0 1 331.500 315.400A8 8 0 0 1 320.400 321A8 8 0 0 1 308 323A8 8 0 0 1 295.600 321A8 8 0 0 1 284.500 315.400A8 8 0 0 1 275.600 306.500A8 8 0 0 1 270 295.400A8 8 0 0 1 268 283A8 8 0 0 1 270 270.600A8 8 0 0 1 275.600 259.500A8 8 0 0 1 284.500 250.600A8 8 0 0 1 295.600 245A8 8 0 0 1 308 243A8 8 0 0 1 320.400 245A8 8 0 0 1 331.500 250.600A8 8 0 0 1 340.400 259.500A8 8 0 0 1 346 270.600A8 8 0 0 1 348 283Z"/>
          <g class="handles">
            <rect x="254" y="228" width="10" height="10"/><rect x="303.500" y="228" width="10" height="10"/><rect x="353.500" y="228" width="10" height="10"/>
            <rect x="254" y="278" width="10" height="10"/><rect x="303.500" y="278" width="10" height="10"/><rect x="353.500" y="278" width="10" height="10"/><rect x="373.500" y="278" width="10" height="10"/>
            <rect x="254" y="327" width="10" height="10"/><rect x="303.500" y="327" width="10" height="10"/><rect x="353.500" y="327" width="10" height="10"/>
          </g>

          <g class="cad">
            <path d="M507.500 197V443"/>
            <path d="M507 230C490 230 477 236 468 248C476 258 486 266 483 277C480 287 470 290 462 295C454 300 447 312 447 327C447 345 456 356 465 361C470 364 470 368 469 371C464 372 461 376 463 379C466 382 469 384 466 387C460 388 455 391 453 396H487V413H507"/>
          </g>

          <use href="#plain" x="601" y="230"/>
          <use href="#base" x="760" y="230"/>
          <use href="#flutedBody" x="760" y="230"/>
          <use href="#capP" x="760" y="230"/>
          <use href="#base" x="911" y="233"/>
          <g transform="translate(911 233)">
            <use href="#bodyP" fill="url(#gBody)"/>
            <g clip-path="url(#bodyClip)">
              <g stroke="#3c3e18" stroke-width="4" opacity=".25" transform="translate(-2,-1)"><use href="#twistLines"/></g>
              <g stroke="#4e5022" stroke-width="1.100"><use href="#twistLines"/></g>
              <g stroke="#c8cc84" stroke-width=".8" opacity=".8" transform="translate(1.300 .6)"><use href="#twistLines"/></g>
            </g>
            <ellipse cx="-9" cy="94" rx="4" ry="14" transform="rotate(50 -9 94)" fill="url(#gHi)"/>
            <ellipse cx="6" cy="104" rx="4" ry="14" transform="rotate(50 6 104)" fill="url(#gHi)"/>
            <ellipse cx="-22" cy="84" rx="3" ry="10" transform="rotate(50 -22 84)" fill="url(#gHi)"/>
            <use href="#capP"/>
          </g>

          <g class="cad">
            <path d="M268 484Q307 448 347 484ZM307.500 484V598M268 598H347"/>
            <path d="M269 600C266 604 268 606 264 610C261 614 264 618 267 620C269 624 264 623 260 624C256 626 254 629 254 632H288V650H307"/>
          </g>
          <ellipse class="grayline" cx="307" cy="484" rx="40" ry="6"/>
          <ellipse class="grayline" cx="307" cy="598" rx="39" ry="7"/>

          <path class="cad" d="M601 433V467M601 652V681"/>
          <use href="#plain" x="601" y="466"/>

          <use href="#flutedBody" x="919" y="463"/>
          <use href="#flutedRim" x="919" y="463"/>

          <g class="cad">
            <path d="M1067.500 503V560M1067 624V750M1028 554Q1067 518 1106 554ZM1028 554H1106M1028 668H1106"/>
            <path d="M1028 668C1025 672 1028 675 1022 679C1020 684 1024 688 1027 690C1028 694 1023 692 1019 694C1015 696 1013 700 1013 703H1047V720H1067"/>
          </g>
          <path class="grayaxis" d="M1067 560V624"/>
          <ellipse class="grayline" cx="1067" cy="554" rx="39" ry="6"/>
          <ellipse class="grayline" cx="1067" cy="668" rx="40" ry="7"/>
          <path class="grayline" d="M1105 556C1096 566 1088 575 1091 587C1093 596 1110 600 1120 612C1130 626 1130 642 1122 654C1117 661 1112 665 1106 668"/>

          <use href="#flutedBody" x="1203" y="571"/>
          <use href="#flutedRim" x="1203" y="571"/>

          <g class="axisg">
            <path d="M33 818H63V848H33ZM33 813H63V818M33 813V848M33 804V812"/>
            <path d="M33 810L31 818M33 810L35 818"/>
            <text x="28" y="806">Y</text>
          </g>
          <path class="axisr" d="M34 843H40M48 843H62M58 841L62 843 58 845M52 842H58M52 844H58"/>
          <text class="axisx" x="70" y="849">X</text>

          <path class="cursor" d="M501 597V612L504 609 508 616 511 614 507 608H511Z"/>
        </svg>

        <aside class="nav">
          <div class="navtitle">
            <span>导航工作条</span>
            <span class="navclose"><svg viewBox="0 0 8 8" width="8" height="8"><path d="M1 1l6 6M7 1L1 7" stroke="#501420" stroke-width="1.400"/></svg></span>
          </div>
          <div class="navinner">
            <div class="tabs">
              <span class="tab active"><svg viewBox="0 0 22 22" width="22" height="22"><circle cx="11" cy="11" r="10" fill="#fdf0f4" stroke="#d04060"/><rect x="4.500" y="4.500" width="13" height="13" rx="2" fill="#f0f0fa" stroke="#24246a"/></svg></span>
              <span class="tab"><svg viewBox="0 0 24 22" width="24" height="22"><path d="M1 11l10 6 11-4v5L11 21 1 17z" fill="#e0c030" stroke="#24246a"/><path d="M8 14L21 2l1 4-9 10z" fill="#8088c8" stroke="#24246a"/></svg></span>
              <span class="tab"><svg viewBox="0 0 24 22" width="24" height="22"><path d="M2 12l8-8h6l6 8-8 5h-6z" fill="#9098d0" stroke="#24246a"/><path d="M8 7h8l5 5H3z" fill="#c0c4e8"/></svg></span>
              <span class="tab"><svg viewBox="0 0 24 22" width="24" height="22"><path d="M4 11l14-1 4 5-8 6H8z" fill="#8088c8" stroke="#24246a"/><path d="M14 11l7 4-5 2z" fill="#e8b0a0"/><path d="M8 4h4v9H8z" fill="#f0f0f0" stroke="#24246a"/><path d="M6 2h8v2H6z" fill="#666" stroke="#24246a"/></svg></span>
            </div>
            <div class="page">
              <div class="field"><span>微调距离:</span><span class="inp">5.000</span></div>
              <div class="field"><span>微调角度:</span><span class="inp">45.000</span></div>
              <div class="btns">
                <span class="btn"><span class="l">[Q]</span>选择</span><span class="btn"><span class="l">[R]</span>加锁</span>
                <span class="btn"><span class="l">[W]</span>显示</span><span class="btn"><span class="l">[T]</span>顺序</span>
                <span class="btn"><span class="l">[E]</span>图层</span><span class="btn pressed"><span class="l">[Y]</span>对齐</span>
              </div>
              <hr class="rule">
              <div class="rbtns">
                <span class="rbtn"><span class="l">[Z]</span>靠左对齐</span>
                <span class="rbtn"><span class="l">[X]</span>水平中心</span>
                <span class="rbtn"><span class="l">[C]</span>靠右对齐</span>
                <span class="rbtn"><span class="l">[V]</span>顶部对齐</span>
                <span class="rbtn"><span class="l">[B]</span>竖直中心</span>
                <span class="rbtn"><span class="l">[N]</span>底部对齐</span>
                <span class="rbtn"><span class="l">[M]</span>组合对齐</span>
              </div>
            </div>
          </div>
        </aside>
      </section>
      <div class="vscroll">
        <span class="arr up"></span>
        <div class="vthumb"><i></i></div>
        <span class="arr down"></span>
      </div>
    </div>
    <div class="hscroll">
      <span class="arr left"></span>
      <div class="hthumb"><i></i></div>
      <span class="arr right"></span>
    </div>
  </div>
  <div class="palette">
    <i class="pgrip"></i>
    <span class="sw icon"><svg viewBox="0 0 14 14" width="14" height="14"><path d="M2 11V5l3-3h3v2H6v7zM6 12V6l3-2 3 1v6l-3 1z" fill="#8088c8" stroke="#24246a" stroke-width=".8"/></svg></span>
    <span class="sw c1"></span><span class="sw c2"></span><span class="sw c3"></span><span class="sw c4"></span><span class="sw c5"></span><span class="sw c6"></span><span class="sw c7"></span><span class="sw c8"></span>
    <span class="sw c9"></span><span class="sw c10"></span><span class="sw c11"></span><span class="sw c12"></span><span class="sw c13"></span><span class="sw c14"></span><span class="sw c15"></span><span class="sw c16"></span>
    <span class="sw c17"></span><span class="sw c18"></span><span class="sw c19"></span><span class="sw c20"></span><span class="sw c21"></span><span class="sw c22"></span><span class="sw c23"></span><span class="sw c24"></span>
    <span class="sw c25"></span><span class="sw c26"></span><span class="sw c27"></span><span class="sw c28"></span><span class="sw c29"></span><span class="sw c30"></span><span class="sw c31"></span><span class="sw c32"></span>
    <span class="sw multi"><svg viewBox="0 0 12 12" width="12" height="12"><rect width="12" height="12" fill="#fff"/><path d="M0 0h4v4H0z" fill="#602080"/><path d="M4 0h4v4H4z" fill="#f0e040"/><path d="M8 0h4v4H8z" fill="#208040"/><path d="M0 4h4v4H0z" fill="#20c040"/><path d="M4 4h4v4H4z" fill="#202060"/><path d="M8 4h4v4H8z" fill="#e040a0"/><path d="M0 8h4v4H0z" fill="#f0e040"/><path d="M4 8h4v4H4z" fill="#e08040"/><path d="M8 8h4v4H8z" fill="#202060"/></svg></span>
  </div>
</main>

<footer class="status">
  <span class="stext"><span class="m">1</span>个对象被选<span class="m"> </span>类型<span class="m">:</span>多义线<span class="m"> </span>尺寸<span class="m">:X30.0 Y30.0 Z0.0 </span>高度<span class="m">:0.0,0.0</span></span>
  <div class="sright">
    <svg class="s1" viewBox="0 0 16 16" width="16" height="16"><path d="M2 8a6 6 0 0 1 11-3" fill="none" stroke="#30c030" stroke-width="3"/><path d="M14 8a6 6 0 0 1-11 3" fill="none" stroke="#141480" stroke-width="3"/><path d="M0 7h6L3 11zM16 9h-6l3-4z" fill="#141480"/></svg>
    <svg class="s2" viewBox="0 0 16 16" width="16" height="16"><path d="M5 1h10v11q0 3-3 3H2q-2-2 0-3h3z" fill="#e8e8f8" stroke="#24246a"/><path d="M7 4h6M7 7h6M7 10h6" stroke="#24246a"/></svg>
    <svg class="s3" viewBox="0 0 16 16" width="16" height="16"><path d="M8 1v14M1 8h14" stroke="#222" stroke-width="1.100"/></svg>
    <span class="s4"><svg viewBox="0 0 20 20" width="16" height="16"><use href="#boxx"/></svg></span>
    <span class="coords m">-352.607 92.981 0.0</span>
    <span class="play"></span>
    <span class="uu">U</span>
    <span class="grayfield"></span>
  </div>
</footer>
<div class="bottomfill"></div>
</body>
</html>
```
FILE: styles.css
```css
* { box-sizing: border-box; }
html, body { margin: 0; padding: 0; }
body {
  width: 1280px;
  height: 960px;
  overflow: hidden;
  display: flex;
  flex-direction: column;
  background: #eeeeef;
  font-family: "Noto Sans CJK SC", "Liberation Sans", sans-serif;
  font-size: 12px;
  color: #1a1a1a;
  position: relative;
}
.defs { position: absolute; }

.titlebar {
  height: 22px;
  flex: none;
  display: flex;
  align-items: center;
  padding: 0 0 3px 2px;
  border-top: 1px solid #3c4a58;
  background: linear-gradient(#9db4cc, #c6d6e6);
}
.appicon { width: 16px; height: 16px; margin-right: 8px; }
.title { font-family: "Noto Sans", "Noto Sans CJK SC", sans-serif; font-size: 12.5px; color: #222; letter-spacing: .1px; }
.winbtns { margin-left: auto; display: flex; gap: 4px; margin-right: 3px; }
.wb {
  width: 29px; height: 16px;
  border: 1px solid #7d92a8;
  border-radius: 2px;
  background: linear-gradient(#d6e2ee, #a9bdd1 55%, #b9cbdc);
  display: flex; align-items: center; justify-content: center;
}
.wb.close { background: linear-gradient(#e0a090, #c04838 55%, #c86a58); border-color: #8a4a44; }
.w-min { display: block; width: 11px; height: 4px; margin-top: 3px; background: #fff; border: 1px solid #66788c; }
.w-res { display: block; width: 9px; height: 9px; background: #e8eef4; border: 1px solid #56687c; box-shadow: 2px -2px 0 -1px #e8eef4, 2px -2px 0 0 #56687c; }

.menubar {
  height: 24px;
  flex: none;
  display: flex;
  align-items: center;
  gap: 16.8px;
  padding: 0 6px 4px 16px;
  background: #f3f3f3;
  color: #222;
  white-space: nowrap;
}
.company { margin-left: auto; }

.tbrow { height: 27px; flex: none; display: flex; background: #f0f0f0; }
.tb {
  height: 27px;
  display: flex;
  align-items: center;
  border-right: 1px solid #c4c4c4;
  border-bottom: 1px solid #c4c4c4;
}
.tb.full { width: 1280px; border-right: 0; }
.r2a { width: 544px; }
.r2b { width: 166px; margin-left: 14px; }
.r2c { width: 264px; }
.r3a { width: 272px; position: relative; }
.r3b { width: 348px; padding-left: 14px; }
.grip {
  width: 3px; height: 20px;
  margin: 0 2px 0 4px;
  flex: none;
  background: repeating-linear-gradient(#b0b0b0 0 1px, transparent 1px 3px);
}
.gl { margin-right: 4px; }
.g1 { margin-right: 3px; }
.g2 { margin-left: 5px; margin-right: 3px; }
.g3 { margin-left: 7px; margin-right: 2px; }
.g4 { margin-left: 7px; margin-right: 1px; }
.r3a .g5 { position: absolute; right: -10px; }
.ic {
  width: 24px; height: 24px;
  flex: none;
  display: flex; align-items: center; justify-content: center;
}
.ic svg { width: 20px; height: 20px; display: block; }
.ic.on { background: #d4e8f6; box-shadow: inset 0 0 0 1px #86b4d2; }
.ml1 { margin-left: 1px; }
.sep { width: 1px; height: 22px; margin: 0 5px 0 3px; flex: none; background: #a8a8a8; }
.sep.tight { margin: 0 4px 0 2px; }
.sep.wide { margin: 0 7px 0 3px; }
.sep.mr6 { margin-right: 6px; }
.sep.s1 { margin: 0 5px 0 1px; }
.dr { width: 10px; height: 24px; flex: none; display: flex; align-items: center; justify-content: center; }
.dr svg { display: block; }
.dr.end { width: 12px; align-items: flex-end; padding-bottom: 5px; }
.dr.dn { width: 13px; justify-content: flex-start; padding-left: 2px; }
.dr.w9 { width: 9px; }
.dr.w11 { width: 11px; }
.dr.w12 { width: 12px; }
.dr.w15 { width: 15px; justify-content: flex-start; padding-left: 2px; }
.more { width: 18px; margin-left: 2px; font: 12px/12px "Liberation Sans", sans-serif; text-align: center; font-weight: 700; margin-top: -10px; flex: none; }
.mored { margin-left: -14px; margin-top: 12px; }
.xyzt { font: 7px "Liberation Sans", sans-serif; text-anchor: middle; fill: #24246a; }

.main { height: 768px; flex: none; display: flex; border-top: 1px solid #8c8c8c; }
.centercol { width: 1253px; display: flex; flex-direction: column; }
.viewrow { height: 749px; display: flex; }
.canvas { width: 1237px; height: 749px; background: #fff; border-left: 2px solid #9a9a9a; position: relative; overflow: hidden; }
.drawing { display: block; }
.cad, .cad path { fill: none; stroke: #8c1c44; stroke-width: 1; }
.grayline { fill: none; stroke: #aaa; stroke-width: 1; }
.grayaxis { fill: none; stroke: #a0a0a0; stroke-width: 1.500; }
.scallop { fill: none; stroke: #a040a8; stroke-width: 1; }
.handles rect { fill: none; stroke: #000; stroke-width: 1; }
.cadtext text { font-family: "Noto Sans CJK SC", sans-serif; font-size: 26px; font-weight: 700; letter-spacing: .5px; fill: #fff; stroke: #a81038; stroke-width: 1; }
.axisg path { fill: none; stroke: #2a9a2a; stroke-width: 1; }
.axisg text { fill: #50d050; font: 13px "Liberation Sans", sans-serif; stroke: none; }
.axisr { fill: none; stroke: #a02040; stroke-width: 1; }
.axisx { fill: #a02040; font: 15px "Liberation Sans", sans-serif; }
.cursor { fill: #000; stroke: #000; stroke-width: .6; }

.nav {
  position: absolute;
  left: 1px; top: 8px;
  width: 215px; height: 619px;
  background: #a3b9cf;
  border: 1px solid #5e6e7c;
  display: flex;
  flex-direction: column;
}
.navtitle {
  height: 27px;
  flex: none;
  display: flex;
  align-items: center;
  padding: 6px 9px 0 8px;
  font-weight: 700;
  font-size: 13px;
  color: #222;
}
.navclose {
  margin-left: auto;
  margin-top: -4px;
  width: 14px; height: 14px;
  border: 1px solid #7a4a54;
  border-radius: 2px;
  background: #d89aa4;
  display: flex; align-items: center; justify-content: center;
}
.navinner { margin: 0 6px 9px 7px; flex: 1; background: #f0f0f0; padding: 6px 3px 0 4px; display: flex; flex-direction: column; }
.tabs { height: 25px; flex: none; display: flex; padding-left: 1px; }
.tab {
  width: 32px; height: 25px;
  display: flex; align-items: flex-end; justify-content: center;
  padding-bottom: 0;
  border-right: 2px solid #9c9c9c;
  border-top: 1px solid #e8e8e8;
}
.tab svg { flex: none; }
.tab.active { width: 32px; height: 26px; position: relative; z-index: 1; background: #f0f0f0; border-right: 1px solid #aaa; }
.page { flex: 1; border: 1px solid #b0b0b0; border-right: 2px solid #888; border-bottom: 2px solid #888; padding-top: 5px; }
.field { display: flex; align-items: center; gap: 6px; padding-left: 38px; height: 18px; font-size: 12px; }
.inp {
  width: 40px; height: 17px;
  background: #fff;
  border: 1px solid #9a9a9a;
  border-top-color: #555; border-left-color: #555;
  font: 11px/15px "Liberation Mono", monospace;
  letter-spacing: -.5px;
  padding-left: 1px;
}
.btns { display: grid; grid-template-columns: 65px 65px; column-gap: 2px; row-gap: 4px; margin: 5px 0 0 26px; }
.btn {
  height: 20px;
  display: flex; align-items: center; justify-content: center;
  background: #f0f0f0;
  border: 1px solid;
  border-color: #fff #707070 #707070 #fff;
  box-shadow: inset -1px -1px 0 #b0b0b0;
  color: #222;
}
.btn.pressed { border: 1px solid #555; box-shadow: inset 0 0 0 1px #aaa; }
.l { font: 11px "Liberation Mono", monospace; letter-spacing: -.6px; }
.rule { margin: 7px 26px 5px 18px; border: 0; border-top: 1px solid #a8a8a8; border-bottom: 1px solid #fff; height: 2px; }
.rbtns { display: flex; flex-direction: column; gap: 4px; margin: 0 0 0 25px; width: 133px; }
.rbtn {
  height: 18px;
  display: flex; align-items: center; justify-content: center;
  border: 1px solid;
  border-color: #fafafa #8c8c8c #8c8c8c #fafafa;
  color: #a8184a;
  background: #f0f0f0;
}

.vscroll { width: 16px; display: flex; flex-direction: column; background: #f0f0f0; }
.arr { flex: none; display: flex; align-items: center; justify-content: center; }
.arr::before { content: ""; border: 3px solid transparent; }
.arr.up { height: 20px; }
.arr.up::before { border-bottom: 4px solid #606060; border-top: 0; }
.arr.down { height: 17px; }
.arr.down::before { border-top: 4px solid #606060; border-bottom: 0; }
.vthumb {
  width: 15px; height: 496px; margin-top: 216px;
  border: 1px solid #9c9c9c;
  border-radius: 2px;
  background: linear-gradient(90deg, #f4f4f4, #e4e4e4 50%, #cfcfcf);
  display: flex; align-items: center; justify-content: center;
}
.vthumb i { width: 7px; height: 6px; margin-top: -2px; background: repeating-linear-gradient(#666 0 1px, transparent 1px 2px); }
.hscroll { height: 18px; display: flex; align-items: center; background: #f0f0f0; padding-left: 4px; padding-bottom: 1px; border-bottom: 1px solid #bcbcbc; width: 1253px; }
.arr.left { width: 16px; height: 16px; }
.arr.left::before { border-right: 4px solid #606060; border-left: 0; }
.hthumb {
  width: 1062px; height: 15px;
  border: 1px solid #9c9c9c;
  border-radius: 2px;
  background: linear-gradient(#f2f2f2, #e2e2e2 50%, #cccccc);
  display: flex; align-items: center; justify-content: center;
}
.hthumb i { width: 8px; height: 7px; background: repeating-linear-gradient(90deg, #666 0 1px, transparent 1px 2px); }
.arr.right { width: 16px; height: 16px; margin-left: 137px; }
.arr.right::before { border-left: 4px solid #606060; border-right: 0; }

.palette { width: 27px; display: flex; flex-direction: column; align-items: center; gap: 2px; padding: 58px 4px 0 3px; background: #f0f0f0; border-left: 1px solid #e4e4e4; border-bottom: 1px solid #bcbcbc; }
.pgrip { width: 16px; height: 2px; margin-bottom: 4px; background: repeating-linear-gradient(90deg, #b0b0b0 0 1px, transparent 1px 3px); }
.sw { width: 15px; height: 15px; flex: none; border: 1px solid #dcdcdc; display: block; }
.sw.icon { background: #d4e8f6; border-color: #86b4d2; }
.sw.multi { padding: 1px; border: 0; }
.sw svg { display: block; }
.c1{background:#f00000}.c2{background:#ffff00}.c3{background:#0000f0}.c4{background:#00ff00}.c5{background:#00ffff}.c6{background:#f000f0}.c7{background:#fff}.c8{background:#000}
.c9{background:#b8b8b8}.c10{background:#f06428}.c11{background:#909010}.c12{background:#0a5f0a}.c13{background:#3c8c82}.c14{background:#0a4640}.c15{background:#7878c0}.c16{background:#686868}
.c17{background:#282828}.c18{background:#f8aa64}.c19{background:#3ce63c}.c20{background:#3cbe78}.c21{background:#3cd2be}.c22{background:#82a0c0}.c23{background:#640082}.c24{background:#808080}
.c25{background:#f8b4c8}.c26{background:#ffd700}.c27{background:#a02808}.c28{background:#08a008}.c29{background:#000064}.c30{background:#00c8ff}.c31{background:#e07868}.c32{background:#800000}

.status {
  height: 27px;
  flex: none;
  display: flex;
  align-items: center;
  padding: 0 0 3px 7px;
  border-top: 1px solid #fafafa;
  font-size: 16px;
  color: #222;
  white-space: nowrap;
}
.m { font: 14px "Liberation Mono", monospace; letter-spacing: -.4px; white-space: pre; }
.sright { margin-left: auto; display: flex; align-items: center; height: 100%; }
.s1 { margin-right: 15px; }
.s2 { margin-right: 7px; }
.s3 { margin-right: 7px; }
.s4 { width: 18px; height: 20px; background: #d4e8f6; border: 1px solid #6078a8; display: flex; align-items: center; justify-content: center; margin-right: 12px; }
.coords { width: 170px; color: #222; }
.coords.m { font-size: 15px; letter-spacing: -1px; }
.play { width: 0; height: 0; border-left: 8px solid #000; border-top: 6px solid transparent; border-bottom: 6px solid transparent; margin-left: 18px; margin-right: 11px; }
.uu { font: 10px "Liberation Mono", monospace; color: #777; width: 19px; padding-left: 2px; }
.grayfield { width: 183px; height: 19px; margin-top: 2px; background: #bcbcbc; border-top: 1px solid #222; border-left: 1px solid #222; }
.bottomfill { flex: 1; border-left: 2px solid #8ea8c8; }
```
